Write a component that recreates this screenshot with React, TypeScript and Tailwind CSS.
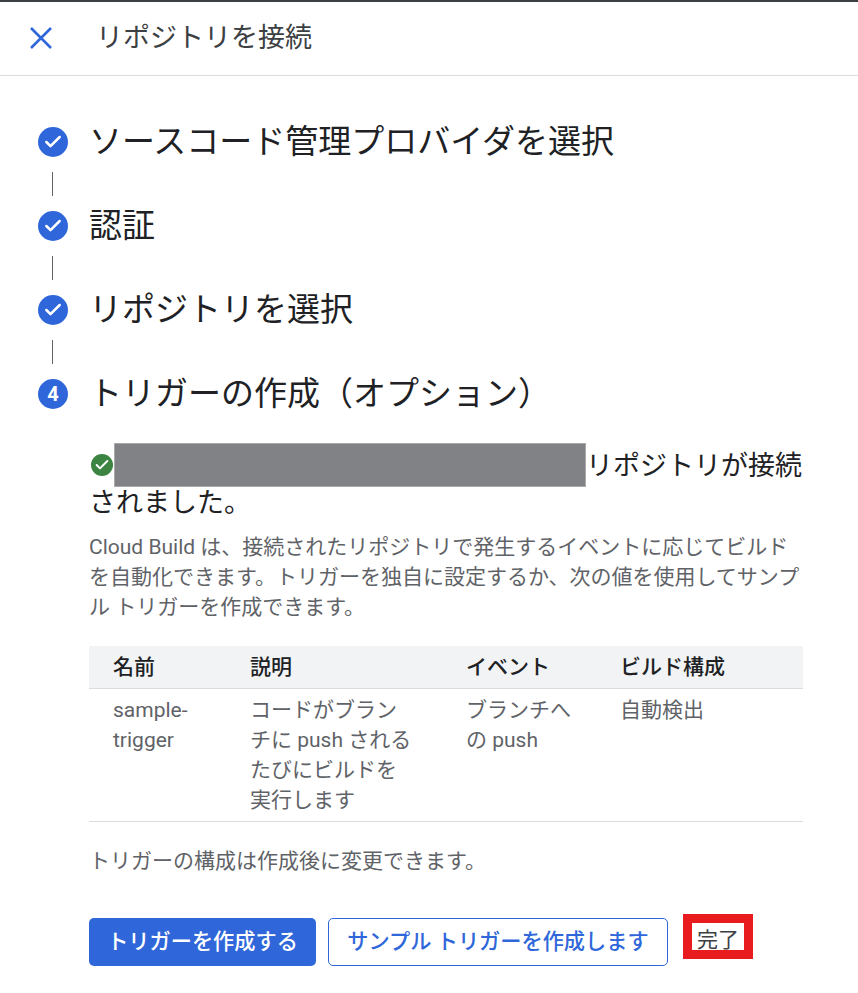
import { Check } from 'lucide-react'

const font = "font-['Roboto','Noto_Sans_CJK_JP',sans-serif]"

function Step({ title, num }: { title: string; num?: number }) {
  return (
    <div className="flex items-center h-[48px]">
      <div className="w-[30px] h-[30px] rounded-full bg-[#2f67da] flex items-center justify-center text-white text-[20px] font-bold shrink-0">
        {num ?? <Check size={20} strokeWidth={3} />}
      </div>
      <div className="ml-[21px] text-[33px] leading-[48px] text-[#202124] whitespace-nowrap">{title}</div>
    </div>
  )
}

function Connector() {
  return <div className="ml-[14px] w-px h-[24px] my-[6px] bg-[#5f6368]" />
}

export default function App() {
  return (
    <div className={`${font} w-[858px] h-[993px] bg-white overflow-hidden border-t-2 border-[#3c4043]`}>
      <div className="h-[74px] flex items-center border-b border-[#dadce0]">
        <svg className="ml-[30px] -mt-[2px]" width="22" height="22" viewBox="0 0 22 22" fill="none" stroke="#2f67da" strokeWidth="2.6">
          <path d="M1 1 L21 21 M21 1 L1 21" />
        </svg>
        <div className="ml-[44px] text-[27px] text-[#3c4043]">リポジトリを接続</div>
      </div>
      <div className="pl-[38px] pt-[42px]">
        <Step title="ソースコード管理プロバイダを選択" />
        <Connector />
        <Step title="認証" />
        <Connector />
        <Step title="リポジトリを選択" />
        <Connector />
        <Step title="トリガーの作成（オプション）" num={4} />
      </div>
      <div className="ml-[89px] w-[714px]">
        <div className="mt-[25px] text-[27px] text-[#202124]">
          <div className="flex items-center h-[44px]">
            <div className="ml-[2px] w-[22px] h-[22px] rounded-full bg-[#3c8442] flex items-center justify-center text-white">
              <Check size={16} strokeWidth={3} />
            </div>
            <div className="ml-[1px] w-[472px] h-[44px] bg-[#818285] border border-[#aaaaaa]" />
            <div className="pt-[2px] whitespace-nowrap">リポジトリが接続</div>
          </div>
          <div className="leading-[32px]">されました。</div>
        </div>
        <p className="mt-[13px] text-[21px] leading-[30px] text-[#5f6368]">
          Cloud Build は、接続されたリポジトリで発生するイベントに応じてビルドを自動化できます。トリガーを独自に設定するか、次の値を使用してサンプル トリガーを作成できます。
        </p>
        <table className="mt-[24px] w-[714px] table-fixed text-[21px] leading-[30px]">
          <thead>
            <tr className="bg-[#f1f3f4] border-b border-[#dadce0] h-[42px] text-left text-[#202124]">
              <th className="w-[138px] pl-[24px] font-medium">名前</th>
              <th className="w-[216px] pl-[23px] font-medium">説明</th>
              <th className="w-[154px] pl-[23px] font-medium">イベント</th>
              <th className="pl-[23px] font-medium">ビルド構成</th>
            </tr>
          </thead>
          <tbody>
            <tr className="border-b border-[#dadce0] align-top text-[#5f6368]">
              <td className="pl-[24px] pt-[6px] pb-[6px]">sample-trigger</td>
              <td className="pl-[23px] pr-[30px] pt-[6px] pb-[6px]">コードがブランチに push されるたびにビルドを実行します</td>
              <td className="pl-[23px] pr-[24px] pt-[6px] pb-[6px]">ブランチへの push</td>
              <td className="pl-[23px] pt-[6px] pb-[6px]">自動検出</td>
            </tr>
          </tbody>
        </table>
        <p className="mt-[24px] text-[21px] leading-[30px] text-[#5f6368]">トリガーの構成は作成後に変更できます。</p>
        <div className="mt-[42px] flex items-start">
          <button className="w-[227px] h-[48px] rounded-[5px] bg-[#2f67da] text-white text-[21.2px] font-medium">トリガーを作成する</button>
          <button className="ml-[12px] w-[340px] h-[48px] rounded-[5px] border border-[#2f67da] text-[#2f67da] text-[21.2px] font-medium">サンプル トリガーを作成します</button>
          <div className="ml-[15px] -mt-[4px] w-[70px] h-[45px] border-[9px] border-[#e81c1f] flex justify-center text-[21px] leading-[30px] pt-[2px] overflow-hidden text-[#3c4043]">完了</div>
        </div>
      </div>
    </div>
  )
}
